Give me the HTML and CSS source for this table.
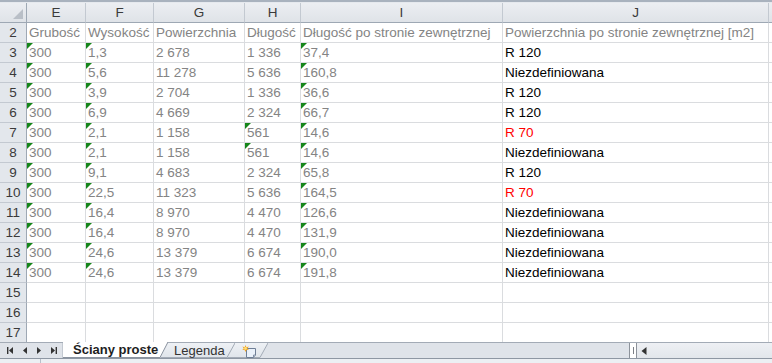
FILE: index.html
```html
<!DOCTYPE html>
<html lang="pl">
<head>
<meta charset="utf-8">
<title>Ściany proste</title>
<link rel="stylesheet" href="styles.css">
</head>
<body>
<div class="app">
  <div class="topstrip"></div>
  <div class="grid">
    <div class="c ch corner"><svg class="selall" width="10" height="10" viewBox="0 0 10 10"><polygon points="10,0 10,10 0,10" fill="#b9bfc7"/></svg></div>
    <div class="c ch">E</div><div class="c ch">F</div><div class="c ch">G</div><div class="c ch">H</div><div class="c ch">I</div><div class="c ch">J</div><div class="c ch fill"></div>

    <div class="c rh">2</div><div class="c">Grubość</div><div class="c">Wysokość</div><div class="c">Powierzchnia</div><div class="c">Długość</div><div class="c">Długość po stronie zewnętrznej</div><div class="c">Powierzchnia po stronie zewnętrznej [m2]</div><div class="c fill"></div>

    <div class="c rh">3</div><div class="c g">300</div><div class="c g">1,3</div><div class="c">2 678</div><div class="c">1 336</div><div class="c g">37,4</div><div class="c k">R 120</div><div class="c fill"></div>

    <div class="c rh">4</div><div class="c g">300</div><div class="c g">5,6</div><div class="c">11 278</div><div class="c">5 636</div><div class="c g">160,8</div><div class="c k">Niezdefiniowana</div><div class="c fill"></div>

    <div class="c rh">5</div><div class="c g">300</div><div class="c g">3,9</div><div class="c">2 704</div><div class="c">1 336</div><div class="c g">36,6</div><div class="c k">R 120</div><div class="c fill"></div>

    <div class="c rh">6</div><div class="c g">300</div><div class="c g">6,9</div><div class="c">4 669</div><div class="c">2 324</div><div class="c g">66,7</div><div class="c k">R 120</div><div class="c fill"></div>

    <div class="c rh">7</div><div class="c g">300</div><div class="c g">2,1</div><div class="c">1 158</div><div class="c g">561</div><div class="c g">14,6</div><div class="c red">R 70</div><div class="c fill"></div>

    <div class="c rh">8</div><div class="c g">300</div><div class="c g">2,1</div><div class="c">1 158</div><div class="c g">561</div><div class="c g">14,6</div><div class="c k">Niezdefiniowana</div><div class="c fill"></div>

    <div class="c rh">9</div><div class="c g">300</div><div class="c g">9,1</div><div class="c">4 683</div><div class="c">2 324</div><div class="c g">65,8</div><div class="c k">R 120</div><div class="c fill"></div>

    <div class="c rh">10</div><div class="c g">300</div><div class="c g">22,5</div><div class="c">11 323</div><div class="c">5 636</div><div class="c g">164,5</div><div class="c red">R 70</div><div class="c fill"></div>

    <div class="c rh">11</div><div class="c g">300</div><div class="c g">16,4</div><div class="c">8 970</div><div class="c">4 470</div><div class="c g">126,6</div><div class="c k">Niezdefiniowana</div><div class="c fill"></div>

    <div class="c rh">12</div><div class="c g">300</div><div class="c g">16,4</div><div class="c">8 970</div><div class="c">4 470</div><div class="c g">131,9</div><div class="c k">Niezdefiniowana</div><div class="c fill"></div>

    <div class="c rh">13</div><div class="c g">300</div><div class="c g">24,6</div><div class="c">13 379</div><div class="c">6 674</div><div class="c g">190,0</div><div class="c k">Niezdefiniowana</div><div class="c fill"></div>

    <div class="c rh">14</div><div class="c g">300</div><div class="c g">24,6</div><div class="c">13 379</div><div class="c">6 674</div><div class="c g">191,8</div><div class="c k">Niezdefiniowana</div><div class="c fill"></div>

    <div class="c rh">15</div><div class="c"></div><div class="c"></div><div class="c"></div><div class="c"></div><div class="c"></div><div class="c"></div><div class="c fill"></div>
    <div class="c rh">16</div><div class="c"></div><div class="c"></div><div class="c"></div><div class="c"></div><div class="c"></div><div class="c"></div><div class="c fill"></div>
    <div class="c rh">17</div><div class="c"></div><div class="c"></div><div class="c"></div><div class="c"></div><div class="c"></div><div class="c"></div><div class="c fill"></div>
  </div>

  <div class="tabbar">
    <div class="tabrow">
      <div class="nav">
        <svg width="62" height="15" viewBox="0 0 62 15">
          <g fill="#333">
            <rect x="7" y="4" width="1.4" height="7"/>
            <polygon points="13,4 9,7.5 13,11"/>
            <polygon points="27,4 23,7.5 27,11"/>
            <polygon points="37,4 41,7.5 37,11"/>
            <polygon points="51,4 55,7.5 51,11"/>
            <rect x="55.6" y="4" width="1.4" height="7"/>
          </g>
        </svg>
      </div>
      <div class="tab active">
        <svg class="tabshape" width="105" height="16" viewBox="0 0 105 16">
          <polygon points="0,0 105,0 97,16 0,16" fill="#ffffff"/>
          <polyline points="105,0 97,15.5 0,15.5" fill="none" stroke="#8a939f" stroke-width="1"/>
        </svg>
        <span class="tablabel">Ściany proste</span>
      </div>
      <div class="tab t2">
        <svg class="tabshape" width="75" height="15" viewBox="0 0 75 15">
          <defs><linearGradient id="tg" x1="0" y1="0" x2="0" y2="1"><stop offset="0" stop-color="#eef1f5"/><stop offset="1" stop-color="#dfe4ea"/></linearGradient></defs>
          <polygon points="8,0 75,0 67,15 0,15" fill="url(#tg)"/>
          <polyline points="75,0 67,14.5 0,14.5" fill="none" stroke="#a3abb6" stroke-width="1"/>
        </svg>
        <span class="tablabel">Legenda</span>
      </div>
      <div class="tab t3">
        <svg class="tabshape" width="41" height="15" viewBox="0 0 41 15">
          <defs><linearGradient id="tg2" x1="0" y1="0" x2="0" y2="1"><stop offset="0" stop-color="#eef1f5"/><stop offset="1" stop-color="#dfe4ea"/></linearGradient></defs>
          <polygon points="8,0 41,0 33,15 0,15" fill="url(#tg2)"/>
          <polyline points="41,0 33,14.5 0,14.5" fill="none" stroke="#a3abb6" stroke-width="1"/>
        </svg>
        <svg class="newsheet" width="15" height="13" viewBox="0 0 15 13">
          <path d="M4.5 3.5 H13.5 V10 L11.5 12.5 H4.5 Z" fill="#eaf1fa" stroke="#6f7f96" stroke-width="1"/>
          <path d="M11.5 12.5 V10 H13.5" fill="#c9d6e6" stroke="#6f7f96" stroke-width="0.8"/>
          <polygon points="3.5,0 4.4,2.2 6.8,1.4 5.3,3.4 7,5 4.6,4.8 3.5,7 2.5,4.8 0.2,5 1.8,3.4 0.4,1.4 2.7,2.2" fill="#f3a51f"/>
          <circle cx="3.5" cy="3.4" r="1.3" fill="#ffe27a"/>
        </svg>
      </div>
      <div class="spacer"></div>
      <div class="hscroll">
        <div class="split"><span class="splitmark"></span></div>
        <div class="track">
          <svg class="leftarrow" width="6" height="8" viewBox="0 0 6 8"><polygon points="5.5,0 0.5,4 5.5,8" fill="#333"/></svg>
        </div>
      </div>
    </div>
    <div class="bline"></div>
    <div class="status"><span class="statusdiv"></span></div>
  </div>
</div>
</body>
</html>
```

FILE: styles.css
```css
html, body {
  margin: 0;
  padding: 0;
  background: #ffffff;
}

body {
  font-family: "Liberation Sans", Arial, sans-serif;
  font-size: 13px;
}

.app {
  width: 772px;
  height: 363px;
  display: flex;
  flex-direction: column;
  overflow: hidden;
}

.topstrip {
  height: 3px;
  box-sizing: border-box;
  border-top: 2px solid #a9b2be;
  background: #e6e9ee;
  flex: none;
}

.grid {
  display: grid;
  grid-template-columns: 27px 59px 68px 91px 56px 202px 266px 3px;
  grid-template-rows: repeat(17, 20px);
  flex: none;
}

.c {
  box-sizing: border-box;
  border-right: 1px solid #dadcdf;
  border-bottom: 1px solid #dadcdf;
  padding: 0 2px;
  font-size: 13.5px;
  line-height: 19px;
  white-space: nowrap;
  overflow: hidden;
  color: #848484;
  position: relative;
}

.ch {
  background: linear-gradient(#eceef2, #dfe3e8);
  border-right-color: #c3c9d1;
  border-bottom-color: #9ea8b4;
  color: #3a3a3a;
  text-align: center;
}

.rh {
  background: #e3e7ec;
  border-right-color: #9ea8b4;
  border-bottom-color: #c3c9d1;
  color: #3a3a3a;
  text-align: center;
  padding: 0;
}

.corner {
  border-right-color: #9ea8b4;
}

.selall {
  position: absolute;
  right: 3px;
  bottom: 3px;
}

.fill {
  border-right: none;
  padding: 0;
}

.ch.fill {
  border-right: none;
}

.k {
  color: #000000;
}

.red {
  color: #ff0000;
}

.g::before {
  content: "";
  position: absolute;
  left: 0;
  top: 0;
  width: 0;
  height: 0;
  border-top: 6px solid #16861a;
  border-right: 6px solid transparent;
}

/* sheet tab bar */
.tabbar {
  height: 21px;
  margin-top: -1px;
  position: relative;
  z-index: 1;
  display: flex;
  flex-direction: column;
  background: #dfe3e9;
  flex: none;
}

.tabrow {
  height: 16px;
  box-sizing: border-box;
  border-top: 1px solid #a3abb6;
  display: flex;
  align-items: flex-start;
}

.nav {
  width: 63px;
  height: 15px;
  box-sizing: border-box;
  border-right: 1px solid #c3c9d1;
  flex: none;
}

.nav svg {
  display: block;
}

.tab {
  position: relative;
  height: 15px;
  flex: none;
  display: flex;
  align-items: center;
}

.tabshape {
  position: absolute;
  left: 0;
  top: 0;
}

.tablabel {
  position: relative;
  line-height: 15px;
  color: #333333;
}

.active {
  width: 105px;
  height: 16px;
  margin-top: -1px;
  z-index: 3;
}

.active .tablabel {
  font-weight: bold;
  color: #1e1e1e;
  padding-left: 10px;
  line-height: 16px;
}

.t2 {
  width: 75px;
  margin-left: -8px;
  z-index: 2;
}

.t2 .tablabel {
  padding-left: 14px;
}

.t3 {
  width: 41px;
  margin-left: -8px;
  z-index: 1;
}

.newsheet {
  position: relative;
  margin-left: 15px;
  margin-top: 1px;
}

.spacer {
  flex: 1;
}

.hscroll {
  width: 143px;
  height: 15px;
  display: flex;
  flex: none;
}

.split {
  width: 8px;
  height: 15px;
  box-sizing: border-box;
  border-left: 1px solid #8d939b;
  border-right: 1px solid #8d939b;
  background: #ffffff;
  display: flex;
  justify-content: center;
  align-items: center;
  flex: none;
}

.splitmark {
  width: 1px;
  height: 7px;
  background: #7b7f86;
}

.track {
  flex: 1;
  height: 15px;
  background: linear-gradient(#eef0f4, #e2e6eb);
  display: flex;
  align-items: center;
}

.leftarrow {
  margin-left: 4px;
  display: block;
}

.bline {
  height: 1px;
  background: #8e97a3;
  flex: none;
}

.status {
  height: 4px;
  background: #eceff3;
  position: relative;
  flex: none;
}

.statusdiv {
  display: block;
  width: 1px;
  height: 4px;
  margin-left: 40px;
  background: #b9c0ca;
}
```
